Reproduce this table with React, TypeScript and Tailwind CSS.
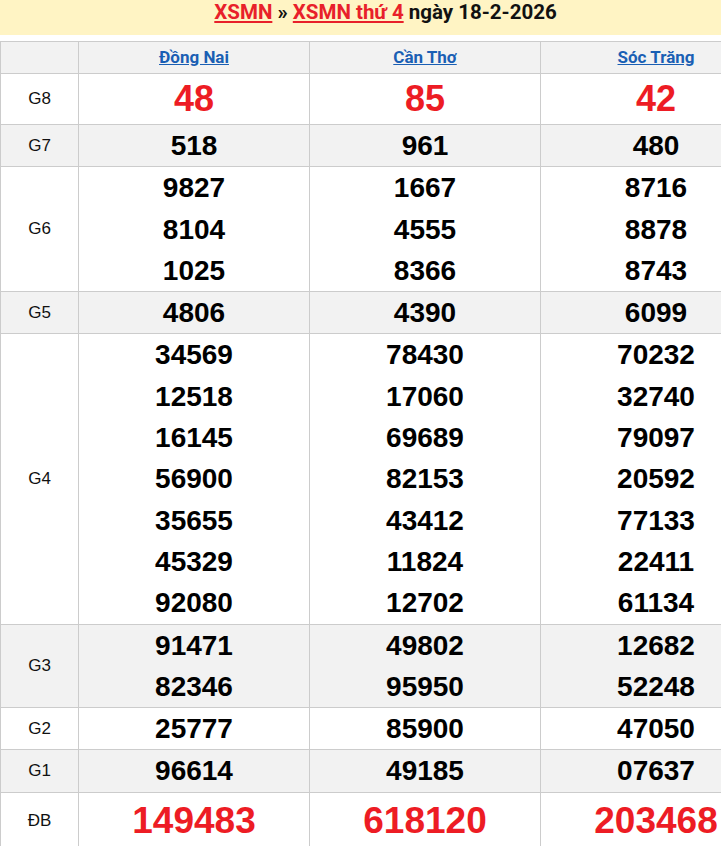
import React from 'react'

const PROVINCES = ['Đồng Nai', 'Cần Thơ', 'Sóc Trăng']

type Row = { label: string; values: string[][]; kind?: 'big' | 'special' }

const ROWS: Row[] = [
  { label: 'G8', values: [['48'], ['85'], ['42']], kind: 'big' },
  { label: 'G7', values: [['518'], ['961'], ['480']] },
  { label: 'G6', values: [['9827', '8104', '1025'], ['1667', '4555', '8366'], ['8716', '8878', '8743']] },
  { label: 'G5', values: [['4806'], ['4390'], ['6099']] },
  {
    label: 'G4',
    values: [
      ['34569', '12518', '16145', '56900', '35655', '45329', '92080'],
      ['78430', '17060', '69689', '82153', '43412', '11824', '12702'],
      ['70232', '32740', '79097', '20592', '77133', '22411', '61134'],
    ],
  },
  { label: 'G3', values: [['91471', '82346'], ['49802', '95950'], ['12682', '52248']] },
  { label: 'G2', values: [['25777'], ['85900'], ['47050']] },
  { label: 'G1', values: [['96614'], ['49185'], ['07637']] },
  { label: 'ĐB', values: [['149483'], ['618120'], ['203468']], kind: 'special' },
]

function NumberCell({ nums, kind }: { nums: string[]; kind?: Row['kind'] }) {
  if (kind === 'big') {
    return <div className="text-[36px] leading-[50px] font-bold text-[#ed1c24]">{nums[0]}</div>
  }
  if (kind === 'special') {
    return <div className="text-[37px] leading-[56px] font-bold text-[#ed1c24]">{nums[0]}</div>
  }
  return (
    <>
      {nums.map(n => (
        <div key={n} className="text-[28px] leading-[41.3px] font-bold text-black">{n}</div>
      ))}
    </>
  )
}

export default function App() {
  return (
    <div className="w-[771px] bg-white font-['Liberation_Sans',Arial,sans-serif]">
      {/* Title bar */}
      <div className="bg-[#fff4c4] h-[35px] flex items-start justify-center">
        <h1 className="text-[20.5px] leading-[24px] font-bold text-[#111] font-['Roboto',sans-serif]">
          <a href="#" className="text-[#e8202a] underline">XSMN</a>
          <span> » </span>
          <a href="#" className="text-[#e8202a] underline">XSMN thứ 4</a>
          <span> ngày 18-2-2026</span>
        </h1>
      </div>

      <table className="mt-[6px] w-[771px] border-collapse table-fixed text-center">
        <colgroup>
          <col className="w-[78px]" />
          <col className="w-[231px]" />
          <col className="w-[231px]" />
          <col className="w-[231px]" />
        </colgroup>
        <thead>
          <tr className="bg-[#f2f2f2] h-[32px]">
            <th className="border border-[#cccccc]"></th>
            {PROVINCES.map(p => (
              <th key={p} className="border border-[#cccccc] font-normal">
                <a href="#" className="text-[17px] font-bold text-[#1a5fb4] underline font-['Roboto',sans-serif]">
                  {p}
                </a>
              </th>
            ))}
          </tr>
        </thead>
        <tbody>
          {ROWS.map((row, i) => (
            <tr key={row.label} className={i % 2 === 1 ? 'bg-[#f2f2f2]' : 'bg-white'}>
              <td className="border border-[#cccccc] text-[17px] text-[#111]">{row.label}</td>
              {row.values.map((nums, j) => (
                <td key={j} className="border border-[#cccccc] p-0">
                  <NumberCell nums={nums} kind={row.kind} />
                </td>
              ))}
            </tr>
          ))}
        </tbody>
      </table>
    </div>
  )
}
